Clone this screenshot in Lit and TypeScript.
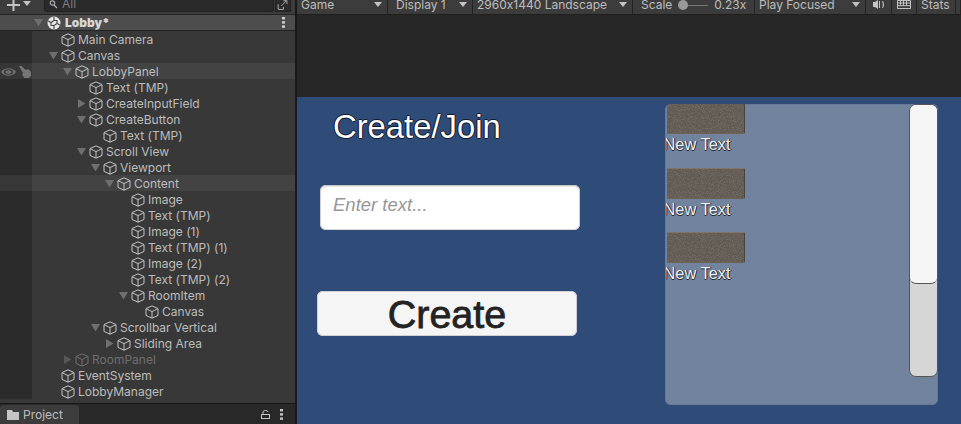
import { LitElement, html, css, svg } from 'lit';
import { customElement } from 'lit/decorators.js';

type Row = {
  name: string;
  depth: number;
  arrow?: 'open' | 'closed';
  hover?: boolean;
  muted?: boolean;
  vis?: boolean;
};

const ROWS: Row[] = [
  { name: 'Main Camera', depth: 0 },
  { name: 'Canvas', depth: 0, arrow: 'open' },
  { name: 'LobbyPanel', depth: 1, arrow: 'open', hover: true, vis: true },
  { name: 'Text (TMP)', depth: 2 },
  { name: 'CreateInputField', depth: 2, arrow: 'closed' },
  { name: 'CreateButton', depth: 2, arrow: 'open' },
  { name: 'Text (TMP)', depth: 3 },
  { name: 'Scroll View', depth: 2, arrow: 'open' },
  { name: 'Viewport', depth: 3, arrow: 'open' },
  { name: 'Content', depth: 4, arrow: 'open', hover: true },
  { name: 'Image', depth: 5 },
  { name: 'Text (TMP)', depth: 5 },
  { name: 'Image (1)', depth: 5 },
  { name: 'Text (TMP) (1)', depth: 5 },
  { name: 'Image (2)', depth: 5 },
  { name: 'Text (TMP) (2)', depth: 5 },
  { name: 'RoomItem', depth: 5, arrow: 'open' },
  { name: 'Canvas', depth: 6 },
  { name: 'Scrollbar Vertical', depth: 3, arrow: 'open' },
  { name: 'Sliding Area', depth: 4, arrow: 'closed' },
  { name: 'RoomPanel', depth: 1, arrow: 'closed', muted: true },
  { name: 'EventSystem', depth: 0 },
  { name: 'LobbyManager', depth: 0 },
];

const cube = svg`<svg class="cube" viewBox="0 0 14 14" width="14" height="14">
  <path d="M7 .8 13 3.6V10.4L7 13.2 1 10.4V3.6ZM1 3.6 7 6.6 13 3.6M7 6.6V13.2" />
</svg>`;

const arrowDown = svg`<svg class="arrow" viewBox="0 0 9 9" width="9" height="9"><path d="M0 1H9L4.5 8.5Z" /></svg>`;
const arrowRight = svg`<svg class="arrow" viewBox="0 0 9 9" width="9" height="9"><path d="M1 0V9L8.5 4.5Z" /></svg>`;
const caret = svg`<svg class="caret" viewBox="0 0 8 5" width="8" height="5"><path d="M0 0H8L4 5Z" /></svg>`;

@customElement('app-root')
export class AppRoot extends LitElement {
  static styles = css`
    :host {
      display: grid;
      grid-template-columns: 295px 2px 1fr;
      width: 961px;
      height: 424px;
      overflow: hidden;
      background: #191919;
      font: 12px/16px Inter, 'Liberation Sans', sans-serif;
      font-feature-settings: 'calt' 0;
      color: #bdbdbd;
    }

    .left {
      display: flex;
      flex-direction: column;
      height: 424px;
      background: #383838;
    }

    .hier-bar {
      display: flex;
      align-items: flex-start;
      height: 14px;
      flex: none;
      background: #3c3c3c;
      border-bottom: 1px solid #232323;
    }

    .plus {
      display: block;
      margin: 0 0 0 7px;
    }

    .plus-caret {
      margin: 1px 0 0 3px;
    }

    .search {
      display: flex;
      align-items: flex-start;
      width: 230px;
      height: 12px;
      margin-left: 13px;
      padding-left: 4px;
      box-sizing: border-box;
      background: #2a2a2a;
      border: 1px solid #212121;
      border-top: 0;
      border-radius: 0 0 3px 3px;
      color: #7d7d7d;
      line-height: 8px;
    }

    .search span {
      margin-left: 3px;
    }

    .scene-pick {
      display: block;
      margin-left: 1px;
      width: 16px;
      height: 12px;
      background: #2a2a2a;
      border: 1px solid #212121;
      border-top: 0;
      box-sizing: border-box;
    }

    .scene-row {
      display: flex;
      align-items: center;
      height: 16px;
      flex: none;
      box-sizing: border-box;
      padding-left: 34px;
      background: #4d4d4d;
      border-bottom: 1px solid #232323;
      color: #d8d8d8;
      font-weight: 700;
    }

    .scene-row .arrow {
      margin-right: 4px;
    }

    .scene-row b {
      margin-left: 4px;
    }

    .dots {
      display: block;
      margin-left: auto;
      margin-right: 10px;
    }

    .tree {
      flex: 1;
    }

    .row {
      display: grid;
      grid-template-columns: 32px 1fr;
      height: 16px;
      background: linear-gradient(90deg, #2b2b2b 32px, #383838 32px);
    }

    .row.hover {
      background: linear-gradient(90deg, #373737 32px, #434343 32px);
    }

    .row.muted {
      color: #6e6e6e;
    }

    .vis {
      display: flex;
      align-items: center;
      gap: 3px;
      padding-left: 1px;
    }

    .node {
      display: flex;
      align-items: center;
      white-space: nowrap;
    }

    .name {
      margin-top: 1px;
    }

    .slot {
      display: flex;
      justify-content: center;
      width: 14px;
      margin-right: 1px;
      flex: none;
    }

    .arrow {
      fill: #6f6f6f;
      display: block;
    }

    .muted .arrow {
      fill: #575757;
    }

    .cube {
      display: block;
      fill: none;
      stroke: #c4c4c4;
      stroke-width: 1;
      margin-right: 3px;
      flex: none;
    }

    .muted .cube {
      stroke: #6e6e6e;
    }

    .tabs {
      display: flex;
      align-items: flex-end;
      height: 20px;
      flex: none;
      background: #282828;
      border-top: 1px solid #191919;
    }

    .tab {
      display: flex;
      align-items: center;
      gap: 4px;
      width: 79px;
      height: 19px;
      box-sizing: border-box;
      padding: 1px 0 0 7px;
      background: #3c3c3c;
      border-radius: 3px 3px 0 0;
    }

    .tab-tools {
      display: flex;
      align-items: center;
      gap: 10px;
      height: 19px;
      margin-left: auto;
      margin-right: 12px;
    }

    .right {
      display: flex;
      flex-direction: column;
      height: 424px;
      background: #272727;
    }

    .game-bar {
      display: grid;
      grid-template-columns: 91px 85px 160px 122px 111px 26px 25px 39px 1fr;
      height: 14px;
      flex: none;
      border-bottom: 1px solid #1f1f1f;
      background: #191919;
      line-height: 10px;
      white-space: nowrap;
    }

    .cell {
      display: flex;
      align-items: flex-start;
      height: 14px;
      padding-left: 4px;
      box-sizing: border-box;
      background: #3c3c3c;
      border-right: 1px solid #232323;
      overflow: hidden;
    }

    .cell.wide {
      padding-left: 8px;
    }

    .cell .caret {
      margin: 2px 5px 0 auto;
      fill: #c4c4c4;
    }

    .slider {
      display: flex;
      align-items: center;
      width: 30px;
      height: 10px;
      margin: 0 6px;
    }

    .slider i {
      display: block;
      width: 10px;
      height: 10px;
      border-radius: 50%;
      background: #999;
      flex: none;
    }

    .slider u {
      display: block;
      flex: 1;
      height: 1px;
      background: #777;
    }

    .cell.icon {
      justify-content: center;
      padding-left: 0;
    }

    .gap {
      height: 82px;
      flex: none;
    }

    .game {
      flex: 1;
      display: flex;
      align-items: flex-start;
      padding-left: 20px;
      background: #2f4b78;
      font-family: 'Liberation Sans', Arial, sans-serif;
    }

    .form {
      display: flex;
      flex-direction: column;
      align-items: flex-start;
      width: 263px;
      flex: none;
    }

    .title {
      margin: 12px 0 0 16px;
      font-size: 32.8px;
      line-height: 36px;
      color: #fff;
      text-shadow: -1px 0 0 #0e1828, 1px 0 0 #0e1828, 0 1px 0 #0e1828, 0 -1px 0 #0e1828;
    }

    .input {
      display: flex;
      align-items: center;
      width: 260px;
      height: 45px;
      margin: 40px 0 0 3px;
      padding: 0 13px 5px;
      box-sizing: border-box;
      background: #fff;
      border-radius: 6px;
      box-shadow: inset 0 1px 2px #bbb, inset 0 0 0 1px #d8d8d8;
      font-size: 18.5px;
      font-style: italic;
      color: #979797;
    }

    .button {
      display: flex;
      align-items: center;
      justify-content: center;
      width: 260px;
      height: 45px;
      margin-top: 61px;
      background: #f5f5f5;
      border-radius: 6px;
      box-shadow: inset 0 0 0 1px #d0d0d0;
      font-size: 39.5px;
      color: #232323;
      -webkit-text-stroke: 0.8px #232323;
    }

    .panel {
      display: flex;
      justify-content: space-between;
      align-items: flex-start;
      width: 273px;
      height: 301px;
      margin: 7px 0 0 85px;
      flex: none;
      background: #72839e;
      border-radius: 6px;
      box-shadow: inset 0 0 0 1px #68799a;
      overflow: hidden;
    }

    .list {
      display: grid;
      grid-auto-rows: 64.5px;
      width: 243px;
      margin-top: -1px;
      overflow: hidden;
    }

    .item {
      padding-left: 1px;
      overflow: hidden;
    }

    .thumb {
      width: 78px;
      height: 31px;
      box-sizing: border-box;
      background: #5f5952;
      border: 1px solid #7f7467;
      border-left: 0;
      border-right-color: #4a433a;
      border-bottom-color: #6d6458;
      border-radius: 0 2px 2px 0;
    }

    .thumb svg {
      display: block;
      width: 100%;
      height: 100%;
    }

    .label {
      margin: 1px 0 0 -3px;
      font-size: 16.4px;
      line-height: 18px;
      white-space: nowrap;
      color: #f2f2f2;
      text-shadow: 1px 0 0 #1b2230, 0 1px 0 #1b2230;
    }

    .scrollbar {
      width: 29px;
      height: 273px;
      box-sizing: border-box;
      background: #d6d6d6;
      border: 1px solid #555;
      border-radius: 7px;
      flex: none;
      overflow: hidden;
    }

    .handle {
      height: 179px;
      box-sizing: border-box;
      background: #f5f5f5;
      border-bottom: 1px solid #555;
      border-radius: 0 0 6px 6px;
    }
  `;

  private renderRow(row: Row) {
    const left = 14 + row.depth * 14;
    return html`<div class="row ${row.hover ? 'hover' : ''} ${row.muted ? 'muted' : ''}">
      <div class="vis">
        ${row.vis
          ? html`<svg viewBox="0 0 15 10" width="15" height="10">
                <path d="M0 5C3 0 12 0 15 5 12 10 3 10 0 5Z" fill="#6f6f6f" />
                <ellipse cx="7.5" cy="5" rx="4.6" ry="2.8" fill="#3a3a3a" />
                <ellipse cx="7.5" cy="5" rx="3" ry="1.8" fill="#6f6f6f" />
              </svg>
              <svg viewBox="0 0 12 12" width="12" height="12" fill="#757575">
                <path d="M0 0 2.5 0 6 3.5H10L12 6V10L10 12H5.5L3 8.5 4 7Z" />
              </svg>`
          : ''}
      </div>
      <div class="node" style="padding-left:${left}px">
        <span class="slot">${row.arrow === 'open' ? arrowDown : row.arrow === 'closed' ? arrowRight : ''}</span>
        ${cube}<span class="name">${row.name}</span>
      </div>
    </div>`;
  }

  render() {
    return html`
      <section class="left">
        <div class="hier-bar">
          <svg class="plus" viewBox="0 0 13 11" width="13" height="11" fill="#c4c4c4">
            <path d="M5.5 0H7.5V4H13V6H7.5V11H5.5V6H0V4H5.5Z" />
          </svg>
          <svg class="caret plus-caret" viewBox="0 0 8 5" width="8" height="5" fill="#c4c4c4"><path d="M0 0H8L4 5Z" /></svg>
          <div class="search">
            <svg viewBox="0 0 10 9" width="10" height="9" fill="none" stroke="#b0b0b0" stroke-width="1.2">
              <circle cx="3.5" cy="3" r="2.2" /><path d="M5 5 8 8" />
            </svg>
            <span>All</span>
          </div>
          <svg class="scene-pick" viewBox="0 0 16 12">
            <path d="M2.5 4.5V10.5H8.5V7.5M6 6.5 12 .5M8.5 .5H12.5V4.5" fill="none" stroke="#b8b8b8" />
          </svg>
        </div>
        <div class="scene-row">
          ${arrowDown}
          <svg viewBox="0 0 14 14" width="14" height="14">
            <circle cx="7" cy="7" r="6.5" fill="#e6e6e6" />
            <path d="M7 1V4.5L4 6.5 1 5M7 13V9.5M4 6.5V9.5L7 9.5 10 7.5V4.5L7 4.5M10 7.5 13 9" fill="none" stroke="#444" stroke-width="1.1" />
          </svg>
          <b>Lobby*</b>
          <svg class="dots" viewBox="0 0 3 11" width="3" height="11" fill="#d0d0d0">
            <rect y="0" width="3" height="2.4" /><rect y="4.2" width="3" height="2.4" /><rect y="8.4" width="3" height="2.4" />
          </svg>
        </div>
        <div class="tree">${ROWS.map((r) => this.renderRow(r))}</div>
        <div class="tabs">
          <div class="tab">
            <svg viewBox="0 0 12 10" width="12" height="10" fill="#c4c4c4"><path d="M0 0H5L6 2H12V10H0Z" /></svg>
            <span>Project</span>
          </div>
          <div class="tab-tools">
            <svg viewBox="0 0 9 9" width="9" height="9" fill="none" stroke="#c4c4c4">
              <path d="M2 4V2A2.5 1.5 0 0 1 7 2" /><rect x=".5" y="4.5" width="8" height="4" />
            </svg>
            <svg viewBox="0 0 3 11" width="3" height="11" fill="#c4c4c4">
              <rect width="3" height="2.4" /><rect y="4.2" width="3" height="2.4" /><rect y="8.4" width="3" height="2.4" />
            </svg>
          </div>
        </div>
      </section>
      <div></div>
      <section class="right">
        <div class="game-bar">
          <div class="cell"><span>Game</span>${caret}</div>
          <div class="cell wide"><span>Display 1</span>${caret}</div>
          <div class="cell"><span>2960x1440 Landscape</span>${caret}</div>
          <div class="cell wide">
            <span>Scale</span>
            <div class="slider"><i></i><u></u></div>
            <span>0.23x</span>
          </div>
          <div class="cell"><span>Play Focused</span>${caret}</div>
          <div class="cell icon">
            <svg viewBox="0 0 12 9" width="12" height="9" fill="#c4c4c4">
              <path d="M0 2H2L5 0V9L2 7H0ZM6 1H7V8H6ZM9 1.5 10 1C11.3 3 11.3 6 10 8L9 7.5C10 6 10 3 9 1.5Z" />
            </svg>
          </div>
          <div class="cell icon">
            <svg viewBox="0 0 14 10" width="14" height="10" fill="none" stroke="#c4c4c4">
              <path d="M.5 .5H13.5V8.5H.5ZM.5 3H13.5M.5 5.7H13.5M3.5 .5V5.7M6.5 .5V5.7M9.5 .5V5.7" />
            </svg>
          </div>
          <div class="cell"><span>Stats</span></div>
          <div class="cell"></div>
        </div>
        <div class="gap"></div>
        <div class="game">
          <div class="form">
            <div class="title">Create/Join</div>
            <div class="input">Enter text...</div>
            <div class="button">Create</div>
          </div>
          <div class="panel">
            <svg width="0" height="0">
              <filter id="grain">
                <feTurbulence type="fractalNoise" baseFrequency="1.1" numOctaves="2" />
                <feColorMatrix values="0 0 0 0 0.62  0 0 0 0 0.58  0 0 0 0 0.52  0.5 0 0 0 -0.2" />
              </filter>
            </svg>
            <div class="list">
              ${[0, 1, 2].map(
                () => html`<div class="item">
                  <div class="thumb"><svg><rect width="100%" height="100%" filter="url(#grain)" /></svg></div>
                  <div class="label">New Text</div>
                </div>`,
              )}
            </div>
            <div class="scrollbar"><div class="handle"></div></div>
          </div>
        </div>
      </section>
    `;
  }
}
